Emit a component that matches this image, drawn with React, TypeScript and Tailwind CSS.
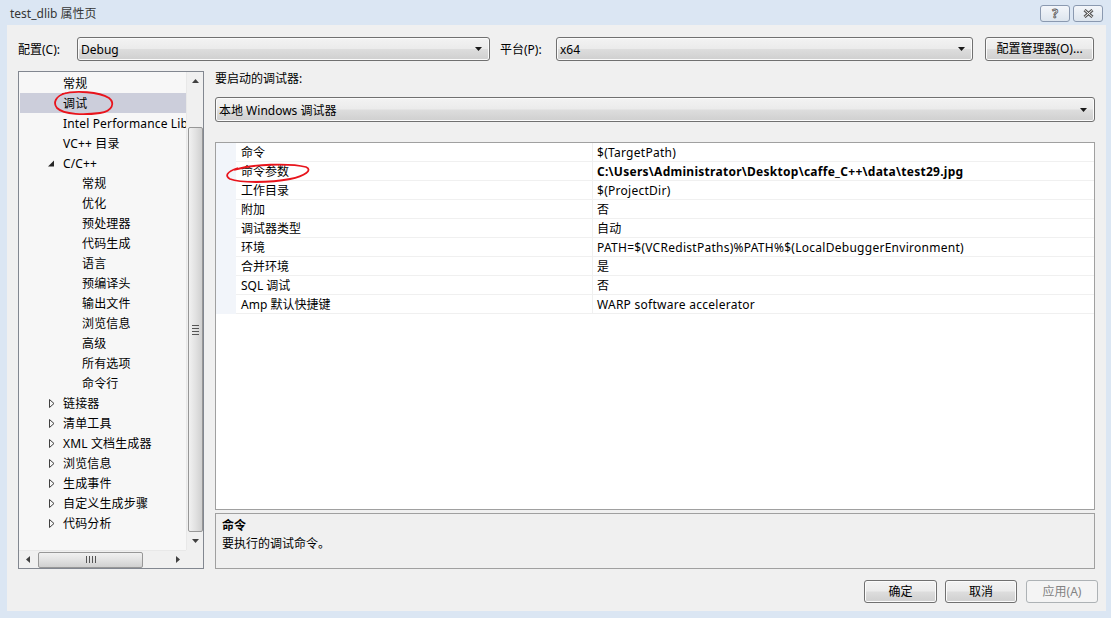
import React from 'react';

const btnBg = 'bg-[linear-gradient(#f3f3f3_0%,#ebebeb_48%,#dddddd_52%,#cfcfcf_100%)]';

function Combo({ value, className }: { value: string; className: string }) {
  return (
    <div className={`${className} ${btnBg} h-full border border-[#707070] rounded-[3px] flex items-center pl-[3px] pr-[7px] shadow-[inset_0_0_0_1px_#fbfbfb]`}>
      <span className="flex-1 relative top-px">{value}</span>
      <svg width="7" height="4" viewBox="0 0 7 4"><path d="M0 0h7L3.5 4z" fill="#1a1a1a" /></svg>
    </div>
  );
}

function Button({ label, className, disabled }: { label: string; className: string; disabled?: boolean }) {
  return (
    <div
      className={`${className} flex items-center justify-center rounded-[3px] border ${
        disabled ? 'border-[#adb2b5] bg-[#f4f4f4] text-[#838383]' : `border-[#707070] ${btnBg} shadow-[inset_0_0_0_1px_#fbfbfb]`
      }`}
    >
      {label}
    </div>
  );
}

type Item = { text: string; level: number; arrow?: 'open' | 'closed'; selected?: boolean };

const items: Item[] = [
  { text: '常规', level: 1 },
  { text: '调试', level: 1, selected: true },
  { text: 'Intel Performance Library', level: 1 },
  { text: 'VC++ 目录', level: 1 },
  { text: 'C/C++', level: 1, arrow: 'open' },
  ...['常规', '优化', '预处理器', '代码生成', '语言', '预编译头', '输出文件', '浏览信息', '高级', '所有选项', '命令行'].map(
    (t) => ({ text: t, level: 2 })
  ),
  ...['链接器', '清单工具', 'XML 文档生成器', '浏览信息', '生成事件', '自定义生成步骤', '代码分析'].map((t) => ({
    text: t,
    level: 1,
    arrow: 'closed' as const,
  })),
];

const props: [string, string, boolean?][] = [
  ['命令', '$(TargetPath)'],
  ['命令参数', 'C:\\Users\\Administrator\\Desktop\\caffe_C++\\data\\test29.jpg', true],
  ['工作目录', '$(ProjectDir)'],
  ['附加', '否'],
  ['调试器类型', '自动'],
  ['环境', 'PATH=$(VCRedistPaths)%PATH%$(LocalDebuggerEnvironment)'],
  ['合并环境', '是'],
  ['SQL 调试', '否'],
  ['Amp 默认快捷键', 'WARP software accelerator'],
];

function Tree() {
  return (
    <div className="w-[186px] h-full border border-[#828790] bg-[#f7f7f7] flex flex-col">
      <div className="flex flex-1 min-h-0">
        <div className="w-[167px] overflow-hidden">
          {items.map((it, i) => (
            <div key={i} className="h-[20px] flex items-center relative whitespace-nowrap">
              {it.selected && <div className="absolute left-[1px] right-0 top-[1px] bottom-[-1px] bg-[#cccedb]" />}
              <div className={`relative top-[2px] flex items-center ${it.level === 2 ? 'pl-[63px]' : 'pl-[44px]'}`}>
                {it.arrow === 'open' && (
                  <svg className="absolute left-[29px] top-[4px]" width="7" height="7" viewBox="0 0 7 7">
                    <path d="M6 0.5V6.5H0z" fill="#262626" />
                  </svg>
                )}
                {it.arrow === 'closed' && (
                  <svg className="absolute left-[30px] top-[3px]" width="6" height="9" viewBox="0 0 6 9">
                    <path d="M0.5 0.5L5 4.5L0.5 8.5z" fill="none" stroke="#404040" />
                  </svg>
                )}
                <span className="leading-[16px] tracking-[0.15px]">{it.text}</span>
              </div>
            </div>
          ))}
        </div>
        {/* vertical scrollbar */}
        <div className="w-[17px] bg-[#f0f0f0] border-l border-[#e8e8e8] flex flex-col items-center">
          <div className="h-[17px] flex items-center justify-center">
            <svg width="7" height="4" viewBox="0 0 7 4"><path d="M0 4h7L3.5 0z" fill="#404040" /></svg>
          </div>
          <div className="mt-[38px] h-[405px] w-[15px] rounded-[2px] border border-[#979797] bg-linear-to-r from-[#f1f1f1] via-[#e2e2e2] to-[#d0d0d0] flex items-center justify-center">
            <div className="flex flex-col gap-[2px]">
              <div className="w-[7px] h-px bg-[#555]" />
              <div className="w-[7px] h-px bg-[#555]" />
              <div className="w-[7px] h-px bg-[#555]" />
              <div className="w-[7px] h-px bg-[#555]" />
            </div>
          </div>
          <div className="h-[17px] flex items-center justify-center">
            <svg width="7" height="4" viewBox="0 0 7 4"><path d="M0 0h7L3.5 4z" fill="#404040" /></svg>
          </div>
        </div>
      </div>
      <div className="h-[18px] flex">
        <div className="w-[167px] bg-[#f0f0f0] border-t border-[#e8e8e8] flex items-center">
          <div className="w-[17px] flex items-center justify-center">
            <svg width="4" height="7" viewBox="0 0 4 7"><path d="M4 0v7L0 3.5z" fill="#404040" /></svg>
          </div>
          <div className="ml-[2px] w-[105px] h-[16px] rounded-[2px] border border-[#979797] bg-linear-to-b from-[#f1f1f1] via-[#e2e2e2] to-[#d0d0d0] flex items-center justify-center gap-[2px]">
            <div className="w-px h-[7px] bg-[#555]" />
            <div className="w-px h-[7px] bg-[#555]" />
            <div className="w-px h-[7px] bg-[#555]" />
            <div className="w-px h-[7px] bg-[#555]" />
          </div>
          <div className="flex-1 flex items-center justify-end pr-[6px]">
            <svg width="4" height="7" viewBox="0 0 4 7"><path d="M0 0v7L4 3.5z" fill="#404040" /></svg>
          </div>
        </div>
        <div className="w-[17px] bg-[#f0f0f0]" />
      </div>
    </div>
  );
}

export default function App() {
  return (
    <div className="w-[1111px] h-[618px] bg-[#dbe6f3] flex flex-col relative overflow-hidden text-[12px] text-black font-['Noto_Sans','Noto_Sans_CJK_SC',sans-serif]">
      {/* title bar */}
      <div className="h-[25px] flex items-center pl-[10px] relative">
        <span className="text-[#363636] relative top-px">test_dlib 属性页</span>
        <div className="absolute left-[1040px] top-[5px] flex gap-[3px]">
          <div className="w-[30px] h-[17px] rounded-[3px] border border-[#8a99b0] bg-linear-to-b from-[#f3f6fa] to-[#dde5ee] flex items-center justify-center">
            <span className="font-bold text-[12px] text-white [-webkit-text-stroke:0.8px_#555] leading-none">?</span>
          </div>
          <div className="w-[30px] h-[17px] rounded-[3px] border border-[#8a99b0] bg-linear-to-b from-[#f3f6fa] to-[#dde5ee] flex items-center justify-center">
            <svg width="11" height="9" viewBox="0 0 11 9">
              <path d="M1.5 1L9.5 8M9.5 1L1.5 8" stroke="#555" strokeWidth="3" />
              <path d="M1.5 1L9.5 8M9.5 1L1.5 8" stroke="#fff" strokeWidth="1" />
            </svg>
          </div>
        </div>
      </div>

      {/* body */}
      <div className="flex-1 ml-[7px] mr-[5px] mb-[7px] bg-[#f0f0f0] flex flex-col pl-[11px] pr-[12px] pt-[12px]">
        <div className="h-[24px] flex items-center">
          <span className="w-[59px] relative top-px">配置(C):</span>
          <Combo value="Debug" className="w-[413px]" />
          <span className="ml-[10px] w-[56px] relative top-px">平台(P):</span>
          <Combo value="x64" className="w-[417px]" />
          <Button label="配置管理器(O)..." className="ml-[12px] w-[109px] h-[24px]" />
        </div>

        <div className="mt-[10px] h-[498px] flex gap-[11px]">
          <Tree />
          <div className="flex-1 flex flex-col -mr-px">
            <div className="h-[14px] leading-[14px] relative top-px">要启动的调试器:</div>
            <div className="mt-[12px] h-[25px]">
              <Combo value="本地 Windows 调试器" className="w-full" />
            </div>
            <div className="mt-[20px] h-[368px] border border-[#a0a0a0] bg-white">
              {props.map(([k, v, bold], i) => (
                <div key={i} className="h-[19px] flex">
                  <div className="w-[20px] bg-[#f2f5fa]" />
                  <div className="w-[357px] pl-[5px] pt-[2px] border-b border-r border-[#f0f0f0] leading-[16px]">{k}</div>
                  <div className={`flex-1 pl-[4px] pt-[2px] border-b border-[#f0f0f0] leading-[16px] tracking-[0.27px] ${bold ? 'font-bold' : ''}`}>
                    {v}
                  </div>
                </div>
              ))}
            </div>
            <div className="mt-[3px] h-[56px] border border-[#a0a0a0] bg-[#f0f0f0] px-[6px] pt-[3px] leading-[18px]">
              <div className="font-bold">命令</div>
              <div>要执行的调试命令。</div>
            </div>
          </div>
        </div>

        <div className="mt-[11px] h-[23px] flex justify-end gap-[8px] -mr-[4px]">
          <Button label="确定" className="w-[73px]" />
          <Button label="取消" className="w-[72px]" />
          <Button label="应用(A)" className="w-[72px] ml-px" disabled />
        </div>
      </div>

      {/* red annotations */}
      <svg className="absolute left-0 top-0 pointer-events-none" width="1111" height="618">
        <path
          d="M62,94 C76,90 99,92 109,98 C115,103 113,111 100,113 C85,115 64,115 57,108 C53,103 55,96 66,93"
          fill="none"
          stroke="#e8141c"
          strokeWidth="1.8"
        />
        <path
          d="M234,170 C252,164 290,163 306,167 C313,170 305,176 290,179 C270,183 240,183 230,179 C225,176 226,172 238,168"
          fill="none"
          stroke="#e8141c"
          strokeWidth="1.8"
        />
      </svg>
    </div>
  );
}
